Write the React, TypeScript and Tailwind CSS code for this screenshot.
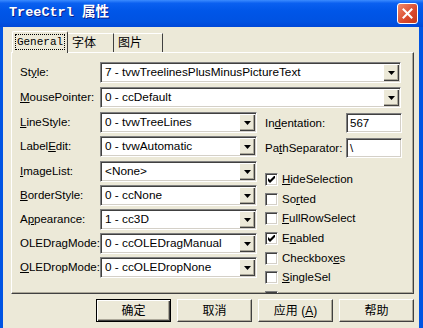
import React from "react";

const ui = { fontFamily: '"Liberation Sans", Arial, "Noto Sans CJK SC", sans-serif' };
const cjk = { fontFamily: '"Liberation Sans", "Noto Sans CJK SC", sans-serif' };

const Key = ({ t, k }: { t: string; k: number }) => (
  <>
    {t.slice(0, k)}
    <span className="underline underline-offset-[1px]">{t[k]}</span>
    {t.slice(k + 1)}
  </>
);

const Arrow = () => (
  <svg width="7" height="4" viewBox="0 0 7 4">
    <path d="M0 0h7L3.5 4z" fill="#000" />
  </svg>
);

const Combo = ({ value, wide }: { value: string; wide?: boolean }) => (
  <div
    className={`${wide ? "w-[301px]" : "w-[157px]"} h-[21px] border-t border-l border-t-[#808080] border-l-[#808080] border-b border-r border-b-white border-r-white bg-white shadow-[inset_1px_1px_0_#404040,inset_-1px_-1px_0_#d4d0c8] flex items-center p-[1px]`}
  >
    <span className="flex-1 pl-[3px] text-[11.8px] text-black leading-[15px] whitespace-nowrap">{value}</span>
    <div className="w-[16px] h-[17px] bg-[#ece9d8] border-t border-l border-t-white border-l-white shadow-[inset_-1px_-1px_0_#404040,inset_-2px_-2px_0_#aca899] flex items-center justify-center">
      <Arrow />
    </div>
  </div>
);

const TextBox = ({ value }: { value: string }) => (
  <div className="w-[56px] h-[20px] border-t border-l border-t-[#808080] border-l-[#808080] border-b border-r border-b-white border-r-white bg-white shadow-[inset_1px_1px_0_#404040,inset_-1px_-1px_0_#d4d0c8] flex items-center pl-[3px] text-[11.5px] leading-[15px]">
    {value}
  </div>
);

const Check = ({ on, label }: { on?: boolean; label: React.ReactNode }) => (
  <div className="flex items-center h-[20px] shrink-0">
    <div className="w-[13px] h-[13px] border-t border-l border-t-[#808080] border-l-[#808080] border-b border-r border-b-white border-r-white bg-white shadow-[inset_1px_1px_0_#404040,inset_-1px_-1px_0_#d4d0c8] flex items-center justify-center">
      {on && (
        <svg width="7" height="7" viewBox="0 0 7 7">
          <path d="M0 2v3l2 2 5-5V-1L2 4z" fill="#000" />
        </svg>
      )}
    </div>
    <span className="ml-[4px] text-[11.5px] leading-[15px]">{label}</span>
  </div>
);

const Row = ({ label, children, mt }: { label: React.ReactNode; children: React.ReactNode; mt: string }) => (
  <div className={`flex items-center h-[21px] ${mt}`}>
    <div className="w-[80px] text-[11.5px] leading-[15px]">{label}</div>
    {children}
  </div>
);

const Btn = ({ children, def }: { children: React.ReactNode; def?: boolean }) => (
  <div
    className={`w-[75px] h-[23px] bg-[#ece9d8] flex items-center justify-center text-[12px] ${
      def
        ? "border border-black shadow-[inset_1px_1px_0_#fff,inset_-1px_-1px_0_#404040,inset_-2px_-2px_0_#aca899]"
        : "border-t border-l border-t-white border-l-white border-b border-r border-b-[#404040] border-r-[#404040] shadow-[inset_-1px_-1px_0_#aca899]"
    }`}
    style={cjk}
  >
    {children}
  </div>
);

export default function App() {
  return (
    <div className="w-[423px] h-[328px] overflow-hidden bg-[#0054e3] flex flex-col text-black" style={ui}>
      <div className="h-[27px] shrink-0 flex items-center justify-between pl-[9px] pr-[5px] bg-[linear-gradient(#3b8bff_0%,#0a60f0_12%,#0056e8_40%,#0052e2_80%,#0048d8_100%)]">
        <span
          className="text-white font-bold text-[13.5px] [text-shadow:1px_1px_0_#0a1e8c]"
          style={{ fontFamily: '"Liberation Mono", "Noto Sans CJK SC", monospace' }}
        >
          TreeCtrl 属性
        </span>
        <div className="w-[21px] h-[21px] rounded-[3px] border border-white bg-[linear-gradient(135deg,#f08a6c,#d9482b_60%,#c43a1c)] flex items-center justify-center">
          <svg width="11" height="11" viewBox="0 0 11 11">
            <path d="M1.5 1.5l8 8M9.5 1.5l-8 8" stroke="#fff" strokeWidth="2" strokeLinecap="square" />
          </svg>
        </div>
      </div>

      <div className="flex-1 ml-[3px] mr-[4px] bg-[#ece9d8] pt-[4px] flex flex-col">
        <div className="flex items-end h-[21px] ml-[9px] relative z-10">
          <div className="h-[22px] w-[56px] bg-[#ece9d8] border-t border-l border-t-white border-l-white border-r border-r-[#404040] rounded-t-[2px] flex items-start justify-center pt-[3px] -mb-[1px]">
            <span
              className="outline outline-1 outline-dotted outline-black px-[1px] text-[11px] leading-[14px]"
              style={{ fontFamily: '"Liberation Mono", monospace' }}
            >
              General
            </span>
          </div>
          <div className="h-[19px] w-[46px] border-t border-t-white border-r border-r-[#404040] flex items-center pl-[4px] text-[12px]" style={cjk}>
            字体
          </div>
          <div className="h-[19px] w-[49px] border-t border-t-white border-r border-r-[#404040] flex items-center pl-[4px] text-[12px]" style={cjk}>
            图片
          </div>
        </div>

        <div className="ml-[8px] w-[403px] h-[242px] border-t border-l border-t-white border-l-white border-b border-r border-b-[#404040] border-r-[#404040] shadow-[inset_-1px_-1px_0_#aca899] pl-[8px] pt-[9px] overflow-hidden">
          <Row label={<Key t="Style:" k={2} />} mt="">
            <Combo wide value="7 - tvwTreelinesPlusMinusPictureText" />
          </Row>
          <Row label={<Key t="MousePointer:" k={0} />} mt="mt-[4px]">
            <Combo wide value="0 - ccDefault" />
          </Row>
          <div className="flex">
            <div className="flex flex-col">
              <Row label={<Key t="LineStyle:" k={0} />} mt="mt-[4px]">
                <Combo value="0 - tvwTreeLines" />
              </Row>
              <Row label={<Key t="LabelEdit:" k={5} />} mt="mt-[3px]">
                <Combo value="0 - tvwAutomatic" />
              </Row>
              <Row label={<Key t="ImageList:" k={0} />} mt="mt-[4px]">
                <Combo value="<None>" />
              </Row>
              <Row label={<Key t="BorderStyle:" k={0} />} mt="mt-[3px]">
                <Combo value="0 - ccNone" />
              </Row>
              <Row label={<Key t="Appearance:" k={1} />} mt="mt-[3px]">
                <Combo value="1 - cc3D" />
              </Row>
              <Row label={<Key t="OLEDragMode:" k={6} />} mt="mt-[3px]">
                <Combo value="0 - ccOLEDragManual" />
              </Row>
              <Row label={<Key t="OLEDropMode:" k={0} />} mt="mt-[3px]">
                <Combo value="0 - ccOLEDropNone" />
              </Row>
            </div>
            <div className="flex flex-col ml-[8px]">
              <div className="flex items-center h-[20px] mt-[5px]">
                <div className="w-[81px] text-[11.5px] leading-[15px]">
                  <Key t="Indentation:" k={2} />
                </div>
                <TextBox value="567" />
              </div>
              <div className="flex items-center h-[20px] mt-[5px]">
                <div className="w-[81px] text-[11.5px] leading-[15px]">
                  <Key t="PathSeparator:" k={2} />
                </div>
                <TextBox value="\" />
              </div>
              <div className="flex flex-col mt-[11px]">
                <Check on label={<Key t="HideSelection" k={0} />} />
                <Check label={<Key t="Sorted" k={2} />} />
                <div className="-mt-[1px]" />
                <Check label={<Key t="FullRowSelect" k={0} />} />
                <Check on label={<Key t="Enabled" k={1} />} />
                <Check label={<Key t="Checkboxes" k={8} />} />
                <div className="-mt-[1px]" />
                <Check label={<Key t="SingleSel" k={0} />} />
                <Check on label={<Key t="Scroll" k={1} />} />
              </div>
            </div>
          </div>
        </div>

        <div className="flex justify-end gap-[6px] mr-[5px] mt-[5px]">
          <Btn def>确定</Btn>
          <Btn>取消</Btn>
          <Btn>
            应用 (<span className="underline">A</span>)
          </Btn>
          <Btn>帮助</Btn>
        </div>
      </div>
    </div>
  );
}
